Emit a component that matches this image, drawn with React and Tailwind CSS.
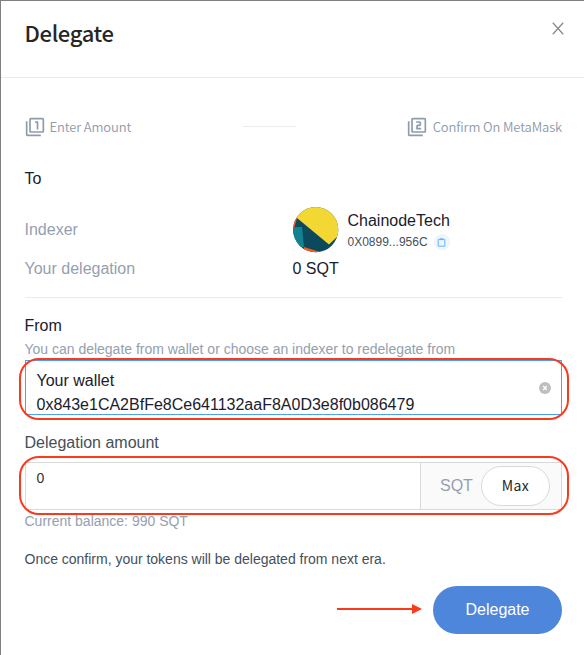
import { MdFilter1, MdFilter2 } from "react-icons/md";

const sans = "font-['Liberation_Sans',Arial,sans-serif]";
const source = "font-['Noto_Sans_CJK_SC',sans-serif]";

function Header() {
  return (
    <header className="flex h-[77px] shrink-0 items-start justify-between border-b border-[#ebebeb] pl-[23.5px] pr-[20px]">
      <h1 className={`${source} mt-[15px] text-[22px] font-medium leading-8 tracking-[-0.35px] text-[#262626]`}>Delegate</h1>
      <svg className="mt-[21px] h-[13px] w-[12px]" viewBox="0 0 12 13" fill="none" stroke="#8a8a8a" strokeWidth="1.3">
        <path d="M0.8 0.8L11.2 12.2M11.2 0.8L0.8 12.2" />
      </svg>
    </header>
  );
}

function Steps() {
  return (
    <div className={`${source} mt-[39px] flex h-5 items-center justify-between text-[13px] font-[350] leading-5 tracking-[-0.12px] text-[#8e9bab]`}>
      <div className="flex items-center gap-[5px]">
        <MdFilter1 className="h-5 w-5" />
        <span>Enter Amount</span>
      </div>
      <div className="ml-[1px] mt-[9px] h-px w-[53px] self-start bg-[#ececec]" />
      <div className="flex items-center gap-[6px]">
        <MdFilter2 className="h-5 w-5" />
        <span>Confirm On MetaMask</span>
      </div>
    </div>
  );
}

function Avatar() {
  return (
    <svg className="h-[46px] w-[46px]" viewBox="0 0 46 46">
      <defs>
        <clipPath id="avatar"><circle cx="22.7" cy="22.7" r="22.6" /></clipPath>
      </defs>
      <g clipPath="url(#avatar)">
        <rect width="46" height="46" fill="#0b4a5c" />
        <path d="M0 0H46V28L36 37.5L4 11L0 8Z" fill="#f3d833" />
        <path d="M0 9L4 11L1.5 20L0 21Z" fill="#f95a20" />
        <path d="M0 20L9 20L11 40L4 40L0 30Z" fill="#128290" />
        <path d="M11 40L27 45L28 46H11Z" fill="#f95a20" />
      </g>
    </svg>
  );
}

function Recipient() {
  return (
    <section className="border-b border-[#ebebeb] pb-[18px]">
      <h2 className="mt-8 h-5 text-base leading-5 text-[#1a202c]">To</h2>
      <div className="mt-[18px] flex h-[46px] items-center">
        <span className="w-[268px] text-base text-[#94a0b0]">Indexer</span>
        <Avatar />
        <div className="ml-[9px] pt-[2px]">
          <div className="text-base leading-5 text-[#1a202c]">ChainodeTech</div>
          <div className="mt-[2px] flex h-[18px] items-center text-xs text-[#454f5b]">
            <span>0X0899...956C</span>
            <span className="ml-[6px] flex h-4 w-4 items-center justify-center rounded-full bg-[#eef5fd]">
              <svg className="h-[9px] w-[9px]" viewBox="0 0 9 9" fill="none" stroke="#68b2fb">
                <path d="M2.5 1.5H1.2V8.2H7.8V1.5H6.5" />
                <path d="M2.5 1.2H6.5" strokeWidth="1.8" />
              </svg>
            </span>
          </div>
        </div>
      </div>
      <div className="mt-[6px] flex h-5 items-center text-base leading-5">
        <span className="w-[268px] text-[#94a0b0]">Your delegation</span>
        <span className="text-[#1a202c]">0 SQT</span>
      </div>
    </section>
  );
}

function WalletSelect() {
  return (
    <section>
      <h2 className="mt-[18px] h-5 text-base leading-5 text-[#1a202c]">From</h2>
      <p className="mt-1 h-[18px] text-sm leading-[18px] tracking-[-0.01px] text-[#94a0b0]">
        You can delegate from wallet or choose an indexer to redelegate from
      </p>
      <div className="relative mt-[2px] flex h-[55px] items-center justify-between border border-[#4aa1f5] pl-[11px] pr-[10px]">
        <div className="pt-[10px] text-base leading-6 text-[#1a202c]">
          <div>Your wallet</div>
          <div>0x843e1CA2BfFe8Ce641132aaF8A0D3e8f0b086479</div>
        </div>
        <svg className="h-3 w-3" viewBox="0 0 12 12">
          <circle cx="6" cy="6" r="6" fill="#bfbfbf" />
          <path d="M4.2 4L7.8 8M7.8 4L4.2 8" stroke="white" strokeWidth="1.2" />
        </svg>
        <div className="pointer-events-none absolute -left-[7px] -right-[8px] -top-[3px] h-[62px] rounded-[20px] border-2 border-[#fb3a1d]" />
      </div>
    </section>
  );
}

function AmountInput() {
  return (
    <section>
      <h2 className="mt-[18px] h-5 text-base leading-5 text-[#454f5b]">Delegation amount</h2>
      <div className="relative mt-[9px] flex h-[48px] border border-[#d9d9d9]">
        <div className="flex-1 pl-[11px] pt-[5px] text-sm leading-5 text-[#333]">0</div>
        <div className="flex w-[141px] items-center border-l border-[#d9d9d9] bg-[#fafafa] pl-[19px]">
          <span className="w-[41px] text-base text-[#94a0b0]">SQT</span>
          <button className={`${source} h-10 w-[69px] rounded-full border border-[#d9d9d9] bg-white pb-[2px] text-sm tracking-[0.4px] text-[#262626]`}>Max</button>
        </div>
        <div className="pointer-events-none absolute -left-[7px] -right-[8px] -top-[7px] h-[59px] rounded-[20px] border-2 border-[#fb3a1d]" />
      </div>
      <p className="mt-[2px] h-[18px] text-sm leading-[18px] text-[#94a0b0]">Current balance: 990 SQT</p>
    </section>
  );
}

function Footer() {
  return (
    <footer className="mt-[17px] flex items-center justify-end">
      <svg className="mr-[11px] mb-[2px] h-3 w-[85px]" viewBox="0 0 85 12">
        <path d="M0 6H78" stroke="#fb3a1d" strokeWidth="2" />
        <path d="M75 1L85 6L75 11Z" fill="#fb3a1d" />
      </svg>
      <button className="h-12 w-[129px] rounded-full bg-[#4d86db] text-base text-white">Delegate</button>
    </footer>
  );
}

export default function App() {
  return (
    <div className={`${sans} relative flex h-[655px] w-[584px] flex-col overflow-hidden border-l border-t border-[#808080] bg-white`}>
      <Header />
      <main className="pl-[23.5px] pr-[22px]">
        <Steps />
        <Recipient />
        <WalletSelect />
        <AmountInput />
        <p className="mt-[19px] h-5 text-sm leading-5 tracking-[-0.01px] text-[#454f5b]">Once confirm, your tokens will be delegated from next era.</p>
        <Footer />
      </main>
      <div className="absolute -left-px top-[37px] h-3 w-px bg-[#18202a]" />
    </div>
  );
}
